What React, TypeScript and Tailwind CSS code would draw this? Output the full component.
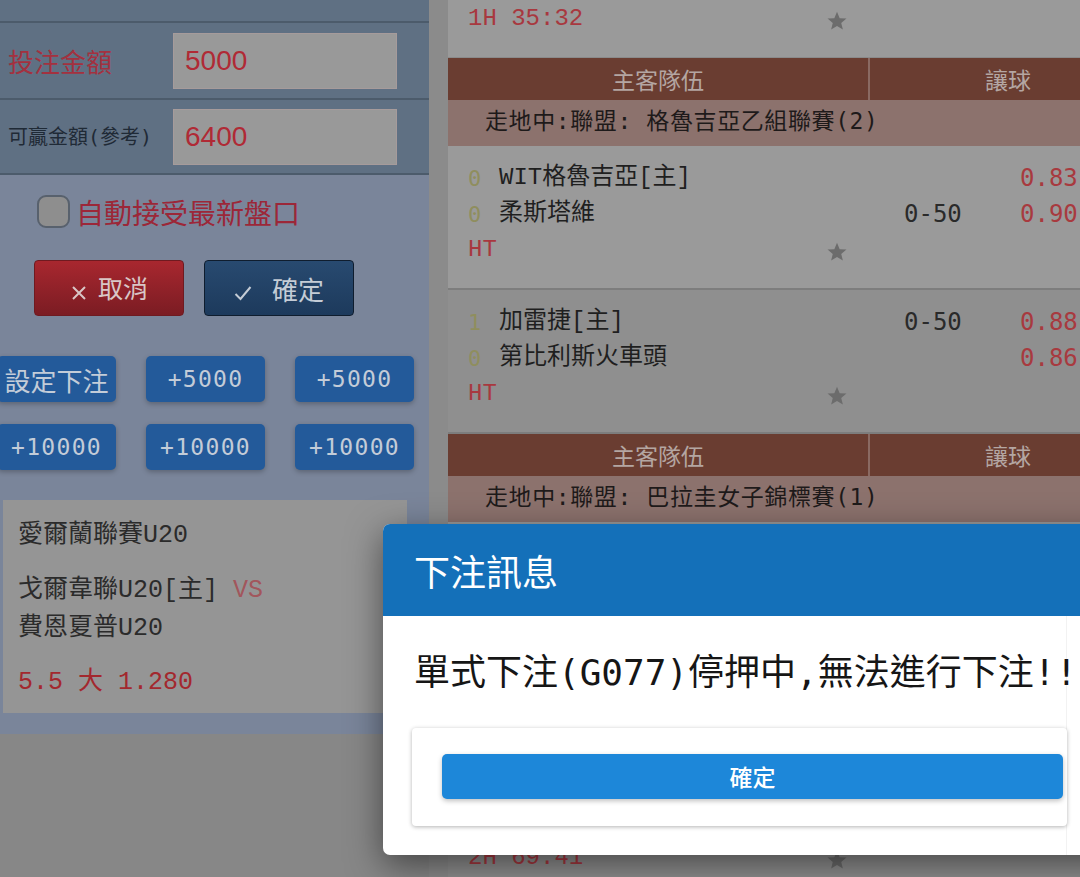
import { type ReactNode } from 'react'

const CJK = "font-['Noto_Sans_CJK_TC',sans-serif]"
const COURIER = "font-['Liberation_Mono','Noto_Sans_CJK_TC',monospace]"
const MONO = "font-['DejaVu_Sans_Mono','Noto_Sans_CJK_TC',monospace]"

function Star() {
  return (
    <svg width="22" height="22" viewBox="0 0 24 24" className="shrink-0 mt-[4px]">
      <polygon
        points="12,2 14.9,8.9 22.3,9.3 16.6,14.1 18.4,21.4 12,17.4 5.6,21.4 7.4,14.1 1.7,9.3 9.1,8.9"
        fill="#6c6c6c"
      />
    </svg>
  )
}

function StatusLine({ text }: { text: string }) {
  return (
    <div className="grid grid-cols-[422px_150px_126px] h-[36px]">
      <div className="flex items-center justify-between pl-[20px] pr-[22px]">
        <span className={`${COURIER} text-[24px] text-[#a8383f]`}>{text}</span>
        <Star />
      </div>
    </div>
  )
}

type Team = { score: string; name: ReactNode; hdp?: string; odds: string }

function TeamLine({ team }: { team: Team }) {
  return (
    <div className="grid grid-cols-[422px_150px_126px] h-[36px] items-center">
      <div className="flex items-center pl-[20px]">
        <span className={`${MONO} w-[31px] text-[22px] text-[#8f8e5e]`}>{team.score}</span>
        <span className={`${COURIER} text-[24px] text-[#1f1f1f]`}>{team.name}</span>
      </div>
      <span className={`${MONO} pl-[34px] text-[24px] text-[#2a2a2a]`}>{team.hdp}</span>
      <span className={`${MONO} text-[24px] text-[#a83a3f]`}>{team.odds}</span>
    </div>
  )
}

function MatchRow({ teams, status, bg }: { teams: Team[]; status: string; bg: string }) {
  return (
    <div className={`pt-[14px] pb-[20px] border-b-2 border-[#7d7d7d] ${bg}`}>
      {teams.map((t, i) => (
        <TeamLine key={i} team={t} />
      ))}
      <StatusLine text={status} />
    </div>
  )
}

function TableHeader() {
  return (
    <div className={`${CJK} grid grid-cols-[422px_276px] h-[42px] bg-[#6a3d31] text-[23px] text-[#b4a6a2]`}>
      <div className="flex items-center justify-center border-r-2 border-[#8a6a62]">主客隊伍</div>
      <div className="flex items-center justify-center">讓球</div>
    </div>
  )
}

function LeagueRow({ name }: { name: string }) {
  return (
    <div className={`${MONO} h-[46px] bg-[#8c726d] pl-[37px] pt-[4px] text-[23px] tracking-[0.6px] text-[#1e1a1a]`}>
      走地中:聯盟: {name}
    </div>
  )
}

function QuickButton({ children, className = '' }: { children: ReactNode; className?: string }) {
  return (
    <button
      type="button"
      className={`h-[46px] rounded-[5px] bg-[#235a9a] text-[#c3ccd8] shadow-[0_2px_5px_rgba(0,0,0,0.25)] ${className}`}
    >
      {children}
    </button>
  )
}

function BetSlip() {
  return (
    <div className="w-[429px] shrink-0">
      <div className="bg-[#7a859a] pb-[21px]">
        <div className="h-[21px] bg-[#5f7083]" />
        <div className="flex h-[77px] items-center border-t-2 border-[#4c5b6b] bg-[#5f7083]">
          <span className={`${CJK} w-[173px] pl-[8px] text-[26px] text-[#a3313f]`}>投注金額</span>
          <div className="flex h-[56px] w-[224px] items-center border border-[#a69b9b] bg-[#999999] pl-[11px] font-['Liberation_Sans',sans-serif] text-[28px] text-[#b02a35]">
            5000
          </div>
        </div>
        <div className="flex h-[77px] items-center border-y-2 border-[#4c5b6b] bg-[#5f7083]">
          <span className={`${MONO} w-[173px] pl-[8px] text-[20px] text-[#1f2a36]`}>可贏金額(參考)</span>
          <div className="flex h-[56px] w-[224px] items-center border border-[#a69b9b] bg-[#999999] pl-[11px] font-['Liberation_Sans',sans-serif] text-[28px] text-[#b02a35]">
            6400
          </div>
        </div>

        <label className="mt-[20px] flex h-[33px] items-center pl-[37px]">
          <span className="h-[33px] w-[33px] rounded-[9px] border-2 border-[#58616d] bg-[#8e8e8e]" />
          <span className={`${CJK} pl-[6px] text-[28px] text-[#9c2738]`}>自動接受最新盤口</span>
        </label>

        <div className="mt-[32px] flex gap-[20px] pl-[34px]">
          <button
            type="button"
            className={`${CJK} flex h-[56px] w-[150px] items-center justify-center gap-[10px] rounded-[4px] border border-[#6f1a20] bg-linear-to-b from-[#a8272f] to-[#7b1c23] text-[25px] text-[#d9c6c6]`}
          >
            <svg width="18" height="18" viewBox="0 0 18 18" className="mt-[10px]">
              <path d="M3 3L15 15M15 3L3 15" stroke="#d9c6c6" strokeWidth="2" />
            </svg>
            取消
          </button>
          <button
            type="button"
            className={`${CJK} flex h-[56px] w-[150px] items-center justify-center gap-[20px] rounded-[4px] border border-[#0f1d2e] bg-linear-to-b from-[#284a70] to-[#1d3a5c] text-[26px] text-[#c4ccd6]`}
          >
            <svg width="18" height="16" viewBox="0 0 18 16" className="mt-[10px]">
              <path d="M1.5 9L6.5 14L16.5 2" stroke="#c4ccd6" strokeWidth="2" fill="none" />
            </svg>
            確定
          </button>
        </div>

        <div className={`${MONO} ml-[-3px] mt-[40px] grid grid-cols-[119px_119px_119px] gap-x-[30px] gap-y-[22px] text-[23px] tracking-[1.3px]`}>
          <QuickButton className={`${CJK} text-[26px] tracking-normal`}>設定下注</QuickButton>
          <QuickButton>+5000</QuickButton>
          <QuickButton>+5000</QuickButton>
          <QuickButton>+10000</QuickButton>
          <QuickButton>+10000</QuickButton>
          <QuickButton>+10000</QuickButton>
        </div>

        <div className={`${COURIER} ml-[3px] mt-[30px] h-[213px] w-[404px] bg-[#959595] pl-[15px] pt-[17px] text-[25px] leading-[38px] text-[#2b2b2b]`}>
          <div>愛爾蘭聯賽U20</div>
          <div className="mt-[17px]">
            戈爾韋聯U20[主] <span className="text-[#a2565c]">VS</span>
            <br />
            費恩夏普U20
          </div>
          <div className="mt-[16px] text-[#a3282e]">5.5 大 1.280</div>
        </div>
      </div>
    </div>
  )
}

function MatchList() {
  return (
    <div className="min-w-0 flex-1 bg-[#9a9a9a]">
      <div className="w-[698px]">
        <div className="h-[58px] border-b border-[#8a8a8a] pt-[1px]">
          <StatusLine text="1H 35:32" />
        </div>
        <TableHeader />
        <LeagueRow name="格魯吉亞乙組聯賽(2)" />
        <MatchRow
          bg="bg-[#9a9a9a]"
          status="HT"
          teams={[
            { score: '0', name: 'WIT格魯吉亞[主]', odds: '0.83' },
            { score: '0', name: '柔斯塔維', hdp: '0-50', odds: '0.90' },
          ]}
        />
        <MatchRow
          bg="bg-[#8f8f8f]"
          status="HT"
          teams={[
            { score: '1', name: '加雷捷[主]', hdp: '0-50', odds: '0.88' },
            { score: '0', name: '第比利斯火車頭', odds: '0.86' },
          ]}
        />
        <TableHeader />
        <LeagueRow name="巴拉圭女子錦標賽(1)" />
        {/* rows hidden behind the dialog */}
        <div className="h-[144px] border-b-2 border-[#7d7d7d] bg-[#9a9a9a]" />
        <div className="h-[42px] bg-[#6a3d31]" />
        <div className="h-[46px] bg-[#8c726d]" />
        <div className="bg-[#8f8f8f] pt-[86px] pb-[20px]">
          <StatusLine text="2H 69:41" />
        </div>
      </div>
    </div>
  )
}

function BetDialog() {
  return (
    <div className="absolute left-[383px] top-[524px] h-[331px] w-[760px] overflow-hidden rounded-[7px] bg-white shadow-[0_10px_35px_rgba(0,0,0,0.5)]">
      <div className={`${CJK} flex h-[92px] items-center bg-[#1470b9] pl-[31px] text-[36px] text-white`}>下注訊息</div>
      <div className="h-[239px] w-[684px] border-r border-[#f2f2f2]">
        <div className={`${MONO} whitespace-nowrap pl-[31px] pt-[33px] text-[36px] leading-[48px] text-[#161616]`}>
          單式下注(G077)停押中,無法進行下注!!
        </div>
        <div className="ml-[29px] mt-[31px] h-[98px] w-[655px] rounded-[4px] bg-white pt-[26px] shadow-[0_1px_4px_rgba(0,0,0,0.3)]">
          <button
            type="button"
            className={`${CJK} ml-[30px] h-[45px] w-[621px] rounded-[5px] bg-[#1d87d9] text-[23px] font-medium text-white shadow-[0_2px_5px_rgba(0,0,0,0.25)]`}
          >
            確定
          </button>
        </div>
      </div>
    </div>
  )
}

export default function App() {
  return (
    <div className="relative flex h-[877px] w-[1080px] overflow-hidden bg-[#878787]">
      <BetSlip />
      <div className="w-[19px] shrink-0 bg-[#8b8b8b]" />
      <MatchList />
      <BetDialog />
    </div>
  )
}
